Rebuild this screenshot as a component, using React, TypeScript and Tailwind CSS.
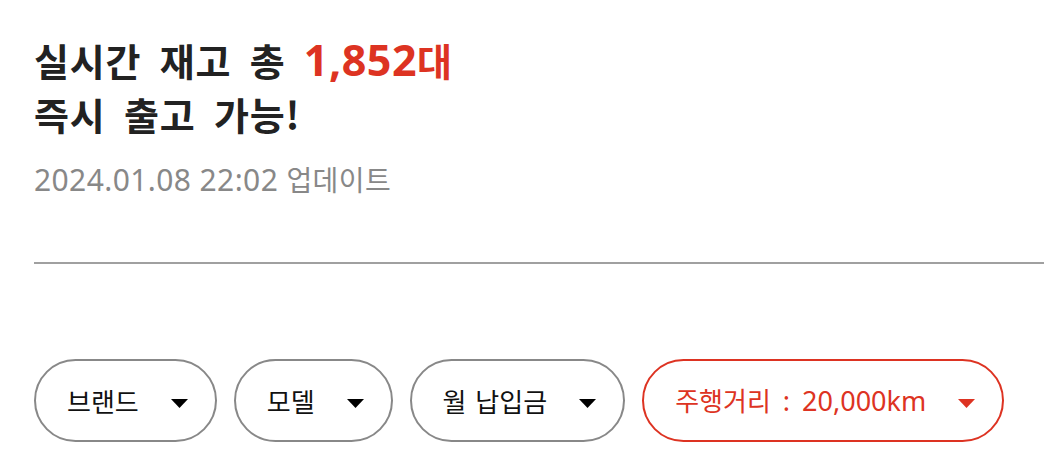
import React from "react";

const LATIN = '"Noto Sans", "Noto Sans CJK KR", sans-serif';

const Arrow = ({ red }: { red?: boolean }) => (
  <svg width="17" height="9" viewBox="0 0 17 9" className="mt-[5px] shrink-0">
    <path d="M0 0 L17 0 L8.5 9 Z" fill={red ? "#dd3322" : "#000000"} />
  </svg>
);

const Chip = ({ children, red }: { children: React.ReactNode; red?: boolean }) => (
  <button
    className={`flex h-[83px] items-center gap-[32px] rounded-full border-2 bg-white pl-[31px] pr-[27px] text-[26px] leading-none ${
      red ? "border-[#dd3322] text-[#dd3322]" : "border-[#888888] text-[#111111]"
    }`}
  >
    <span className="whitespace-nowrap">{children}</span>
    <Arrow red={red} />
  </button>
);

export default function App() {
  return (
    <div
      className="h-[462px] w-[1044px] overflow-hidden bg-white pl-[34px]"
      style={{ fontFamily: '"Noto Sans CJK KR", "Noto Sans", sans-serif' }}
    >
      <h1 className="pt-[33px] text-[38px] font-bold leading-[54px] tracking-[0.8px] text-[#222222] [word-spacing:9px]">
        실시간 재고 총{" "}
        <span className="text-[#dd3322]">
          <span className="text-[43px] leading-none tracking-[0.5px]" style={{ fontFamily: LATIN }}>
            1,852
          </span>
          대
        </span>
        <br />
        즉시 출고 가능!
      </h1>
      <p className="mt-[21px] text-[30px] leading-[36px] tracking-[0.4px] text-[#888888]" style={{ fontFamily: LATIN }}>
        2024.01.08 22:02{" "}
        <span className="text-[28px] leading-none" style={{ fontFamily: '"Noto Sans CJK KR", sans-serif' }}>
          업데이트
        </span>
      </p>
      <div className="mt-[64px] h-[2px] bg-[#a0a0a0]" />
      <div className="mt-[95px] flex gap-[17px]">
        <Chip>브랜드</Chip>
        <Chip>모델</Chip>
        <Chip>
          <span className="[word-spacing:3px]">월 납입금</span>
        </Chip>
        <Chip red>
          주행거리
          <span className="text-[27px] [word-spacing:5px]" style={{ fontFamily: LATIN }}>
            {" "}: 20,000km
          </span>
        </Chip>
      </div>
    </div>
  );
}
